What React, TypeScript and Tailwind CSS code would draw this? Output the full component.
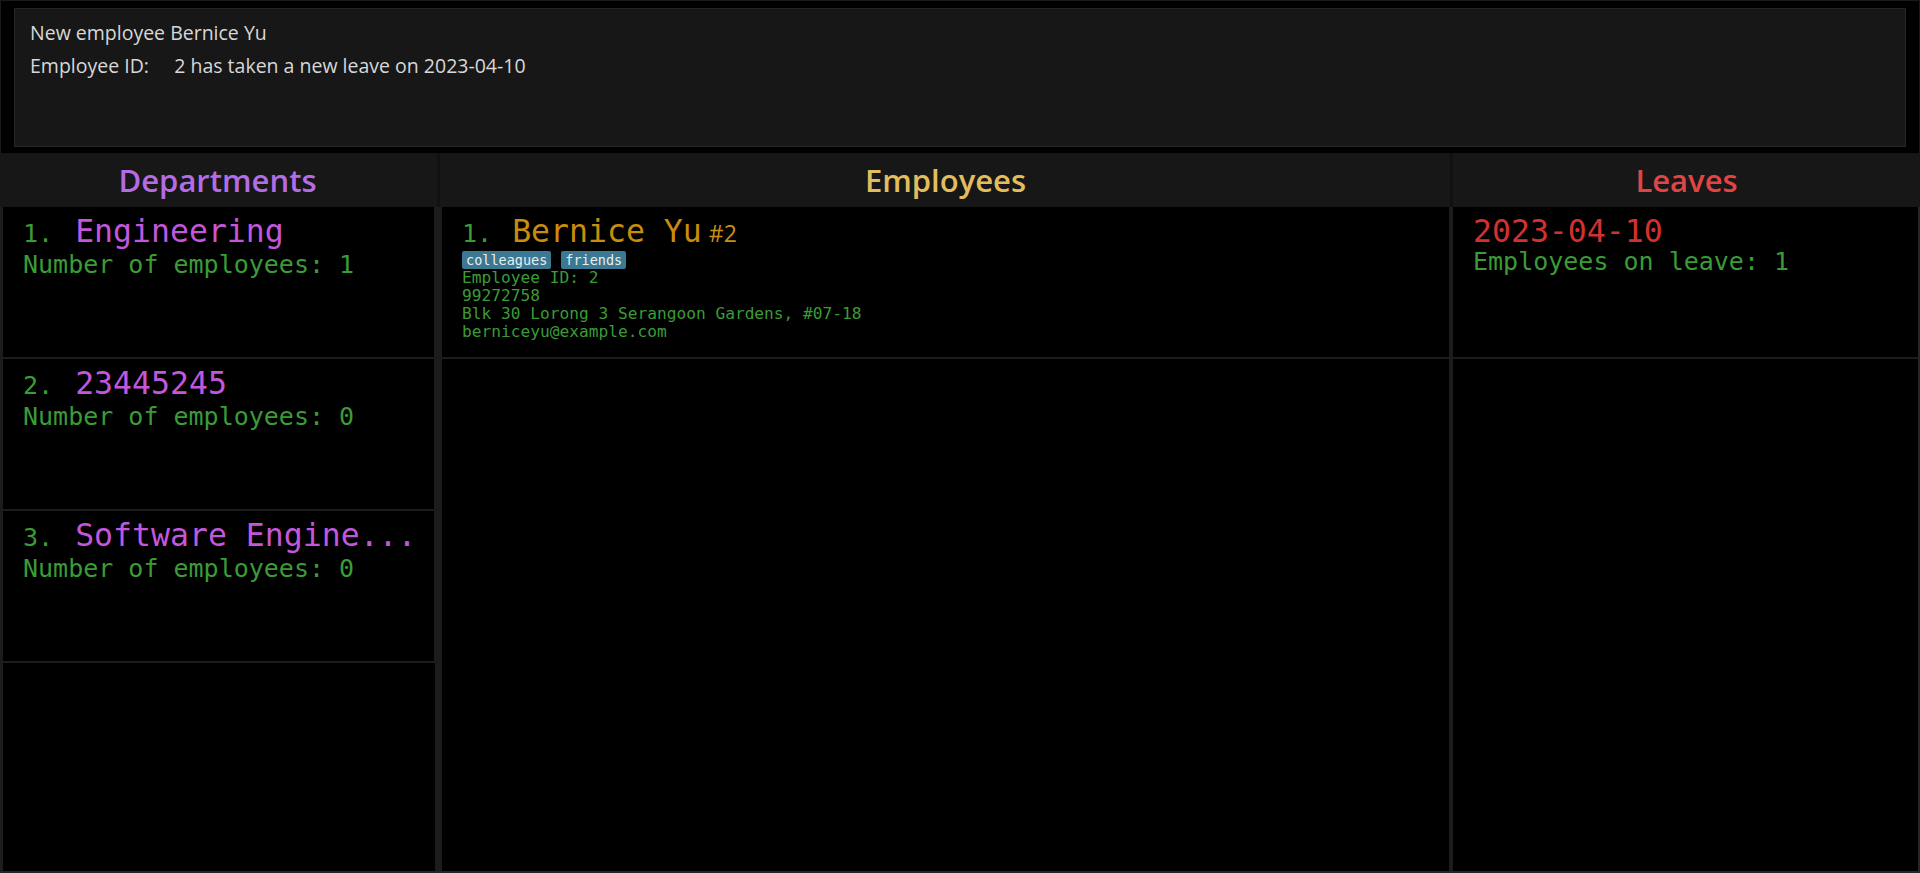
const mono = "font-['DejaVu_Sans_Mono',monospace]";
const sans = "font-['Open_Sans',sans-serif]";

const departments = [
  { name: "Engineering", count: 1 },
  { name: "23445245", count: 0 },
  { name: "Software Engine...", count: 0 },
];

function Header({ title, color }: { title: string; color: string }) {
  return (
    <div className={`h-[54px] shrink-0 bg-[#171717] flex items-center justify-center ${sans} font-semibold text-[31px] ${color}`}>
      {title}
    </div>
  );
}

function Divider() {
  return (
    <div className="flex flex-col shrink-0 w-full h-full">
      <div className="h-[54px] bg-[#171717] flex justify-center">
        <div className="w-[3px] h-full bg-[#111111]" />
      </div>
      <div className="flex-1 bg-[#1c1c1c]" />
    </div>
  );
}

export default function App() {
  return (
    <div className="w-[1920px] h-[873px] bg-black flex flex-col overflow-hidden">
      {/* Result display */}
      <div className="h-[153px] shrink-0 pt-[7px] pb-[6px] px-[13px] border-t border-x border-[#1a1a1a]">
        <div className={`h-[139px] bg-[#171717] border border-[#262626] pl-[15px] pt-[7px] ${sans} text-[19.5px] leading-[33px] text-[#d8d8d8] whitespace-pre`}>
          <div>New employee Bernice Yu</div>
          <div>Employee ID:     2 has taken a new leave on 2023-04-10</div>
        </div>
      </div>

      {/* Lists */}
      <div className="flex-1 min-h-0 flex border-b-2 border-[#262626]">
        {/* Departments */}
        <div className="w-[435px] shrink-0 flex flex-col">
          <Header title="Departments" color="text-[#b46ce4]" />
          <div className="flex-1 bg-black border-l-[3px] border-[#1c1c1c]">
            {departments.map((d, i) => (
              <div key={d.name} className="h-[152px] border-b-2 border-r border-[#1c1c1c] pt-[7px] px-[20px]">
                <div className="flex items-baseline leading-[34px]">
                  <span className={`${mono} text-[25px] text-[#3b9b37] whitespace-pre`}>{`${i + 1}. `}</span>
                  <span className={`${mono} text-[31.5px] text-[#c257dc] ml-[7px] whitespace-pre`}>{d.name}</span>
                </div>
                <div className={`${mono} text-[25px] leading-[27px] text-[#3b9b37]`}>
                  Number of employees: {d.count}
                </div>
              </div>
            ))}
          </div>
        </div>

        <div className="w-[7px] shrink-0">
          <Divider />
        </div>

        {/* Employees */}
        <div className="w-[1007px] shrink-0 flex flex-col">
          <Header title="Employees" color="text-[#e2bd5e]" />
          <div className="flex-1 bg-black">
            <div className="h-[152px] border-b-2 border-[#1c1c1c] pt-[7px] px-[20px]">
              <div className="flex items-baseline leading-[34px]">
                <span className={`${mono} text-[25px] text-[#3b9b37] whitespace-pre`}>1. </span>
                <span className={`${mono} text-[31.5px] text-[#c98c0c] ml-[5px]`}>Bernice Yu</span>
                <span className={`${sans} text-[23px] text-[#c98f14] ml-[7px]`}>#2</span>
              </div>
              <div className="flex gap-[10px] h-[18px]">
                {["colleagues", "friends"].map((t) => (
                  <span
                    key={t}
                    className={`${mono} text-[13.5px] leading-[18px] h-[18px] px-[4px] rounded-[2px] bg-[#3b7891] text-[#e9eef0]`}
                  >
                    {t}
                  </span>
                ))}
              </div>
              <div className={`${mono} text-[16.2px] leading-[18px] text-[#3b9b37]`}>
                <div>Employee ID: 2</div>
                <div>99272758</div>
                <div>Blk 30 Lorong 3 Serangoon Gardens, #07-18</div>
                <div>berniceyu@example.com</div>
              </div>
            </div>
          </div>
        </div>

        <div className="w-[4px] shrink-0">
          <Divider />
        </div>

        {/* Leaves */}
        <div className="flex-1 flex flex-col">
          <Header title="Leaves" color="text-[#e04545]" />
          <div className="flex-1 bg-black border-r-2 border-[#262626]">
            <div className="h-[152px] border-b-2 border-[#1c1c1c] pt-[7px] px-[20px]">
              <div className={`${mono} text-[31.5px] leading-[34px] text-[#d33131]`}>2023-04-10</div>
              <div className={`${mono} text-[25px] leading-[27px] text-[#3b9b37]`}>
                Employees on leave: 1
              </div>
            </div>
          </div>
        </div>
      </div>
    </div>
  );
}
